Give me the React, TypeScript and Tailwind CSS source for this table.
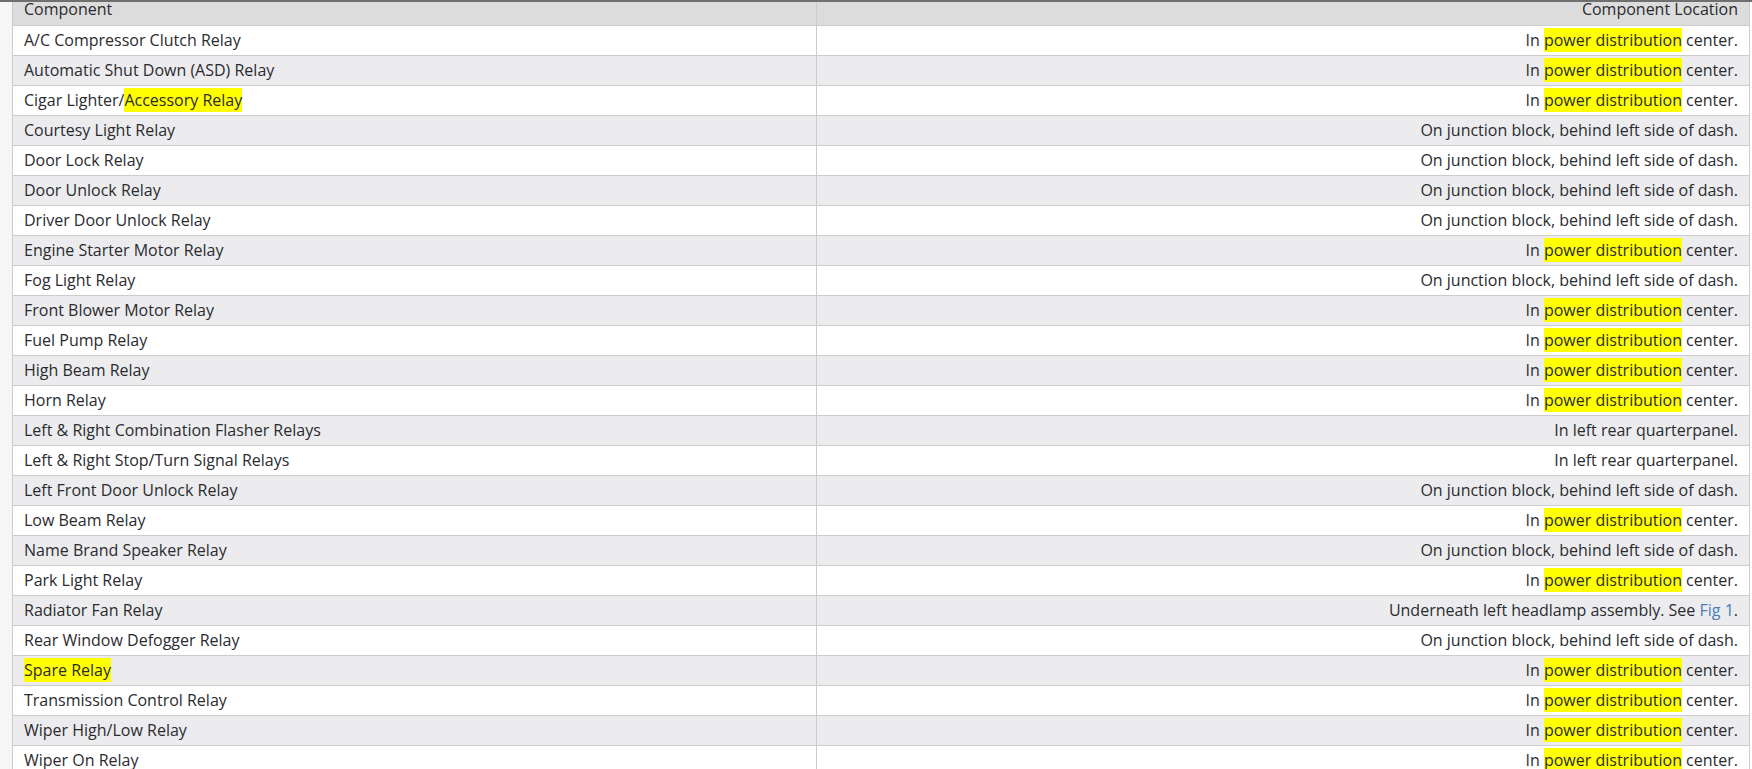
import React from "react";

type Row = { name: React.ReactNode; loc: React.ReactNode };

const Hl = ({ children }: { children: React.ReactNode }) => (
  <span className="bg-[#ffff00] py-[1px]">{children}</span>
);

const PDC = (
  <>
    In <Hl>power distribution</Hl> center.
  </>
);
const JB = "On junction block, behind left side of dash.";
const LRQ = "In left rear quarterpanel.";

const rows: Row[] = [
  { name: "A/C Compressor Clutch Relay", loc: PDC },
  { name: "Automatic Shut Down (ASD) Relay", loc: PDC },
  {
    name: (
      <>
        Cigar Lighter/<Hl>Accessory Relay</Hl>
      </>
    ),
    loc: PDC,
  },
  { name: "Courtesy Light Relay", loc: JB },
  { name: "Door Lock Relay", loc: JB },
  { name: "Door Unlock Relay", loc: JB },
  { name: "Driver Door Unlock Relay", loc: JB },
  { name: "Engine Starter Motor Relay", loc: PDC },
  { name: "Fog Light Relay", loc: JB },
  { name: "Front Blower Motor Relay", loc: PDC },
  { name: "Fuel Pump Relay", loc: PDC },
  { name: "High Beam Relay", loc: PDC },
  { name: "Horn Relay", loc: PDC },
  { name: "Left & Right Combination Flasher Relays", loc: LRQ },
  { name: "Left & Right Stop/Turn Signal Relays", loc: LRQ },
  { name: "Left Front Door Unlock Relay", loc: JB },
  { name: "Low Beam Relay", loc: PDC },
  { name: "Name Brand Speaker Relay", loc: JB },
  { name: "Park Light Relay", loc: PDC },
  {
    name: "Radiator Fan Relay",
    loc: (
      <>
        Underneath left headlamp assembly. See{" "}
        <a className="text-[#4a7cb8]">Fig 1</a>.
      </>
    ),
  },
  { name: "Rear Window Defogger Relay", loc: JB },
  { name: <Hl>Spare Relay</Hl>, loc: PDC },
  { name: "Transmission Control Relay", loc: PDC },
  { name: "Wiper High/Low Relay", loc: PDC },
  { name: "Wiper On Relay", loc: PDC },
];

export default function App() {
  return (
    <div className="w-[1752px] h-[769px] overflow-hidden bg-white border-t-2 border-[#6f6f6f] flex font-['Open_Sans',sans-serif] text-[16px] text-[#2b2b2f]">
      <div className="w-[12px] shrink-0 bg-[#f6f6f6]" />
      <div className="flex-1 border-l border-r border-[#cccccc]">
        <table className="w-full table-fixed border-collapse">
          <colgroup>
            <col className="w-[803px]" />
            <col />
          </colgroup>
          <thead>
            <tr className="bg-[#dcdcdc] h-[23px] border-b border-[#cccccc]">
              <th className="text-left font-normal align-top leading-[15px] px-[11px] pt-0">
                Component
              </th>
              <th className="text-right font-normal align-top leading-[15px] px-[11px] pt-0 border-l border-[#cccccc]">
                Component Location
              </th>
            </tr>
          </thead>
          <tbody>
            {rows.map((r, i) => (
              <tr
                key={i}
                className={`h-[30px] border-b border-[#cccccc] ${
                  i % 2 === 0 ? "bg-white" : "bg-[#ececee]"
                }`}
              >
                <td className="px-[11px] leading-[29px] whitespace-nowrap">
                  {r.name}
                </td>
                <td className="px-[11px] leading-[29px] text-right whitespace-nowrap border-l border-[#cccccc]">
                  {r.loc}
                </td>
              </tr>
            ))}
          </tbody>
        </table>
      </div>
      <div className="w-[2px] shrink-0 bg-white" />
    </div>
  );
}
